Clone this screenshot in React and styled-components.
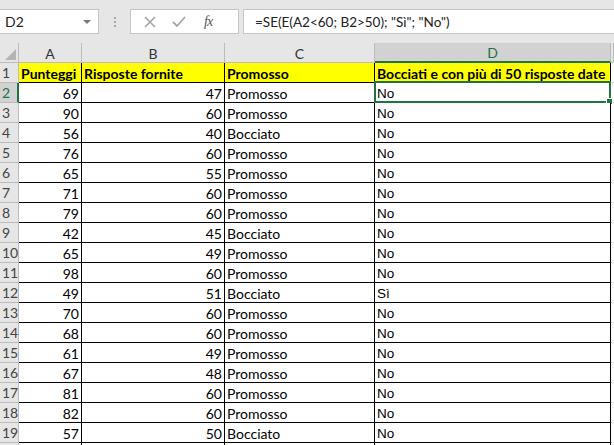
import React from "react";
import styled, { createGlobalStyle } from "styled-components";

const GlobalStyle = createGlobalStyle`
  html, body { margin: 0; padding: 0; background: #ffffff; }
  #root { width: 614px; height: 445px; overflow: hidden; }
`;

const green = "#217346";

const Page = styled.div`
  width: 614px;
  height: 445px;
  overflow: hidden;
  display: flex;
  flex-direction: column;
  background: #fff;
`;

// TOOLBAR
const Toolbar = styled.div`
  height: 43px;
  flex: none;
  box-sizing: border-box;
  padding-top: 9px;
  background: #e6e6e6;
  display: flex;
  align-items: flex-start;
`;

const NameBox = styled.div`
  width: 99px;
  height: 25px;
  box-sizing: border-box;
  background: #fff;
  border: 1px solid #c6c6c6;
  border-left: none;
  display: flex;
  align-items: center;
  justify-content: space-between;
  padding: 0 7px 0 5px;
  font-family: Lato, "Liberation Sans", sans-serif;
  font-size: 14px;
  color: #222;
`;

const Caret = styled.span`
  width: 0;
  height: 0;
  border-left: 4px solid transparent;
  border-right: 4px solid transparent;
  border-top: 4px solid #7a7a7a;
`;

const Dots = styled.div`
  width: 31px;
  height: 25px;
  display: flex;
  flex-direction: column;
  align-items: center;
  justify-content: center;
  gap: 2px;
  span {
    width: 2px;
    height: 2px;
    background: #a8a8a8;
  }
`;

const FnBox = styled.div`
  width: 109px;
  height: 25px;
  box-sizing: border-box;
  background: #fff;
  border: 1px solid #c6c6c6;
  display: flex;
  align-items: center;
  padding-left: 13px;
  gap: 16px;
`;

const FxLabel = styled.span`
  font-family: "Liberation Serif", serif;
  font-style: italic;
  font-size: 14px;
  color: #555;
  margin-left: 2px;
  letter-spacing: -1px;
`;

const FormulaBar = styled.div`
  margin-left: 4px;
  flex: 1;
  height: 25px;
  box-sizing: border-box;
  background: #fff;
  border: 1px solid #c6c6c6;
  border-right: none;
  display: flex;
  align-items: center;
  padding-left: 11px;
  font-family: Lato, "Liberation Sans", sans-serif;
  font-size: 13.5px;
  color: #222;
  white-space: pre;
`;

// SHEET
const Sheet = styled.div`
  display: grid;
  grid-template-columns: 19px 63px 143px 150px 236px 1fr;
  grid-auto-rows: 20px;
  font-family: Lato, "Liberation Sans", sans-serif;
  font-size: 14px;
`;

const Corner = styled.div`
  background: #e6e6e6;
  border-right: 1px solid #bcbcbc;
  border-bottom: 1px solid #bcbcbc;
  box-sizing: border-box;
  position: relative;
  &::after {
    content: "";
    position: absolute;
    right: 2px;
    bottom: 2px;
    width: 0;
    height: 0;
    border-left: 11px solid transparent;
    border-bottom: 11px solid #b4b4b4;
  }
`;

const ColHead = styled.div`
  box-sizing: border-box;
  background: ${({ $active }) => ($active ? "#d2d2d2" : "#e6e6e6")};
  color: ${({ $active }) => ($active ? green : "#333")};
  border-right: 1px solid #bcbcbc;
  border-bottom: ${({ $active }) => ($active ? `2px solid ${green}` : "1px solid #bcbcbc")};
  display: flex;
  align-items: center;
  justify-content: center;
  font-size: 14px;
  padding-top: 1px;
`;

const RowHead = styled.div`
  box-sizing: border-box;
  background: ${({ $active }) => ($active ? "#d2d2d2" : "#e6e6e6")};
  color: ${({ $active }) => ($active ? green : "#444")};
  border-right: ${({ $active }) => ($active ? `2px solid ${green}` : "1px solid #bcbcbc")};
  border-bottom: 1px solid #bcbcbc;
  display: flex;
  align-items: center;
  padding-left: 2px;
  font-size: 14px;
`;

const Cell = styled.div`
  box-sizing: border-box;
  border-right: 1px solid #000;
  border-bottom: 1px solid #000;
  background: ${({ $head }) => ($head ? "#ffff00" : "#fff")};
  font-weight: ${({ $head }) => ($head ? 700 : 400)};
  color: #000;
  display: flex;
  align-items: center;
  justify-content: ${({ $right }) => ($right ? "flex-end" : "flex-start")};
  padding: 1px 2px 0 2px;
  white-space: nowrap;
  position: relative;
  font-family: ${({ $arial }) => ($arial ? '"Liberation Sans", Arial, sans-serif' : 'Lato, "Liberation Sans", sans-serif')};
  font-size: ${({ $arial }) => ($arial ? "13.5px" : "14px")};
`;

const Filler = styled.div`
  background: #fff;
  border-bottom: 1px solid #d4d4d4;
`;

const Selection = styled.div`
  position: absolute;
  left: -1px;
  top: -2px;
  right: -1px;
  bottom: -1px;
  border: 2px solid ${green};
  pointer-events: none;
  &::after {
    content: "";
    position: absolute;
    right: -4px;
    bottom: -4px;
    width: 5px;
    height: 5px;
    background: ${green};
    border: 1px solid #fff;
  }
`;

const XIcon = () => (
  <svg width="12" height="12" viewBox="0 0 12 12">
    <path d="M1 1 L11 11 M11 1 L1 11" stroke="#a6a6a6" strokeWidth="1.6" fill="none" />
  </svg>
);

const CheckIcon = () => (
  <svg width="14" height="12" viewBox="0 0 14 12">
    <path d="M1 6 L5 10 L13 1" stroke="#a6a6a6" strokeWidth="1.8" fill="none" />
  </svg>
);

const data = [
  [69, 47, "Promosso", "No"],
  [90, 60, "Promosso", "No"],
  [56, 40, "Bocciato", "No"],
  [76, 60, "Promosso", "No"],
  [65, 55, "Promosso", "No"],
  [71, 60, "Promosso", "No"],
  [79, 60, "Promosso", "No"],
  [42, 45, "Bocciato", "No"],
  [65, 49, "Promosso", "No"],
  [98, 60, "Promosso", "No"],
  [49, 51, "Bocciato", "Sì"],
  [70, 60, "Promosso", "No"],
  [68, 60, "Promosso", "No"],
  [61, 49, "Promosso", "No"],
  [67, 48, "Promosso", "No"],
  [81, 60, "Promosso", "No"],
  [82, 60, "Promosso", "No"],
  [57, 50, "Bocciato", "No"],
];

export default function App() {
  return (
    <Page>
      <GlobalStyle />
      <Toolbar>
        <NameBox>
          D2
          <Caret />
        </NameBox>
        <Dots>
          <span />
          <span />
          <span />
        </Dots>
        <FnBox>
          <XIcon />
          <CheckIcon />
          <FxLabel>fx</FxLabel>
        </FnBox>
        <FormulaBar>{'=SE(E(A2<60; B2>50); "Sì"; "No")'}</FormulaBar>
      </Toolbar>

      <Sheet>
        <Corner />
        <ColHead>A</ColHead>
        <ColHead>B</ColHead>
        <ColHead>C</ColHead>
        <ColHead $active>D</ColHead>
        <ColHead />

        <RowHead>1</RowHead>
        <Cell $head>Punteggi</Cell>
        <Cell $head>Risposte fornite</Cell>
        <Cell $head>Promosso</Cell>
        <Cell $head>Bocciati e con più di 50 risposte date</Cell>
        <Filler />

        {data.map((r, i) => (
          <React.Fragment key={i}>
            <RowHead $active={i === 0}>{i + 2}</RowHead>
            <Cell $right>{r[0]}</Cell>
            <Cell $right>{r[1]}</Cell>
            <Cell>{r[2]}</Cell>
            <Cell $arial>
              {r[3]}
              {i === 0 && <Selection />}
            </Cell>
            <Filler />
          </React.Fragment>
        ))}

        <RowHead />
        <Cell />
        <Cell />
        <Cell />
        <Cell />
        <Filler />
      </Sheet>
    </Page>
  );
}
